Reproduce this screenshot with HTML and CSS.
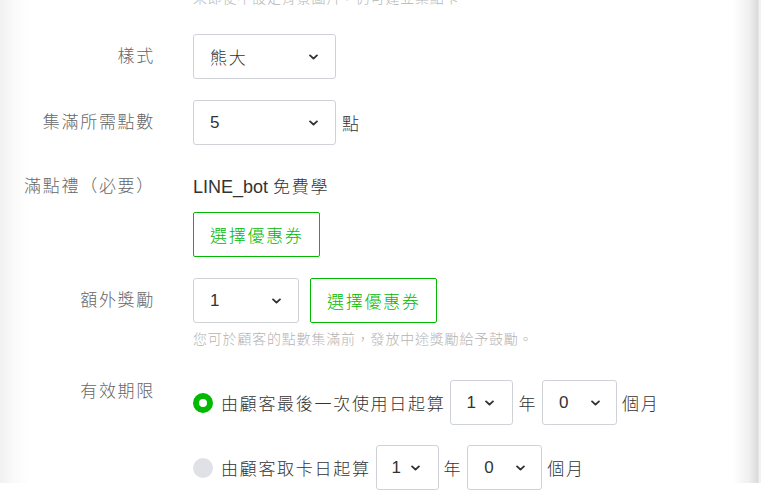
FILE: index.html
```html
<!DOCTYPE html>
<html lang="zh-Hant">
<head>
<meta charset="utf-8">
<link rel="stylesheet" href="styles.css">
</head>
<body>
<div class="page">
  <form class="form">
    <p class="help help-top">來即使不設定背景圖片，仍可建立集點卡。</p>

    <div class="row row-center">
      <div class="label">樣式</div>
      <div class="controls">
        <div class="select w142"><span>熊大</span><svg class="chev" viewBox="0 0 10 6"><polyline points="1.2,1.2 5,4.8 8.8,1.2"/></svg></div>
      </div>
    </div>

    <div class="row row-center">
      <div class="label">集滿所需點數</div>
      <div class="controls">
        <div class="select w142"><span>5</span><svg class="chev" viewBox="0 0 10 6"><polyline points="1.2,1.2 5,4.8 8.8,1.2"/></svg></div>
        <span class="unit">點</span>
      </div>
    </div>

    <div class="row row-top row-gift">
      <div class="label label-line">滿點禮（必要）</div>
      <div class="stack">
        <div class="value"><span class="latin">LINE_bot </span>免費學</div>
        <button type="button" class="btn">選擇優惠券</button>
      </div>
    </div>

    <div class="row row-top">
      <div class="label label-tall">額外獎勵</div>
      <div class="stack">
        <div class="controls gap11">
          <div class="select w106"><span>1</span><svg class="chev" viewBox="0 0 10 6"><polyline points="1.2,1.2 5,4.8 8.8,1.2"/></svg></div>
          <button type="button" class="btn">選擇優惠券</button>
        </div>
        <p class="help help-below">您可於顧客的點數集滿前，發放中途獎勵給予鼓勵。</p>
      </div>
    </div>

    <div class="row row-top row-expiry">
      <div class="label label-line">有效期限</div>
      <div class="options">
        <div class="option">
          <span class="radio on"></span>
          <span class="text">由顧客最後一次使用日起算</span>
          <div class="select w63"><span>1</span><svg class="chev" viewBox="0 0 10 6"><polyline points="1.2,1.2 5,4.8 8.8,1.2"/></svg></div>
          <span class="text">年</span>
          <div class="select w75"><span>0</span><svg class="chev" viewBox="0 0 10 6"><polyline points="1.2,1.2 5,4.8 8.8,1.2"/></svg></div>
          <span class="text">個月</span>
        </div>
        <div class="option">
          <span class="radio"></span>
          <span class="text">由顧客取卡日起算</span>
          <div class="select w63"><span>1</span><svg class="chev" viewBox="0 0 10 6"><polyline points="1.2,1.2 5,4.8 8.8,1.2"/></svg></div>
          <span class="text">年</span>
          <div class="select w75"><span>0</span><svg class="chev" viewBox="0 0 10 6"><polyline points="1.2,1.2 5,4.8 8.8,1.2"/></svg></div>
          <span class="text">個月</span>
        </div>
      </div>
    </div>
  </form>
</div>
</body>
</html>
```

FILE: styles.css
```css
html, body {
  margin: 0;
  padding: 0;
  height: 100%;
  overflow: hidden;
}

body {
  font-family: "Liberation Sans", "Noto Sans CJK TC", sans-serif;
  font-size: 17px;
  font-weight: 300;
  letter-spacing: 1.7px;
  color: #333;
  background: #fff;
}

.page {
  height: 100%;
  background: linear-gradient(to right,
    #f1f1f1 0px, #fafafa 14px, #fff 30px,
    #fff calc(100% - 28px), #f0f0f0 calc(100% - 12px), #dadada calc(100% - 3px),
    #f2f2f2 calc(100% - 2px), #f2f2f2 100%);
}

.help {
  margin: 0;
  font-size: 14px;
  letter-spacing: 0.8px;
  line-height: 20px;
  color: #b4b4b4;
}

.help-top {
  margin-top: -12px;
  margin-left: 193px;
  margin-bottom: 26px;
}

.help-below {
  margin-top: 6px;
}

.row {
  display: grid;
  grid-template-columns: 155px 1fr;
  column-gap: 38px;
  margin-bottom: 21px;
}

.row-center {
  align-items: center;
}

.row-top {
  align-items: start;
}

.row-gift {
  margin-top: 30px;
}

.row-expiry {
  margin-top: 31px;
}

.label {
  text-align: right;
  color: #666;
  white-space: nowrap;
  line-height: 24px;
}

.label-line {
  line-height: 24px;
}

.label-tall {
  line-height: 45px;
}

.controls {
  display: flex;
  align-items: center;
  gap: 6px;
}

.gap11 {
  gap: 11px;
}

.stack {
  display: flex;
  flex-direction: column;
  align-items: flex-start;
}

.value {
  line-height: 24px;
  color: #333;
  margin-bottom: 12px;
}

.latin {
  font-size: 18px;
  letter-spacing: 0;
}

.unit {
  color: #333;
}

.select {
  box-sizing: border-box;
  height: 45px;
  border: 1px solid #cfd3d8;
  border-radius: 3px;
  display: flex;
  align-items: center;
  justify-content: space-between;
  padding: 0 17px 0 16px;
  background: #fff;
  color: #333;
  flex: none;
}

.w142 { width: 143px; }
.w106 { width: 106px; }
.w63 { width: 63px; padding-left: 15px; padding-right: 18px; }
.w75 { width: 75px; padding-right: 16px; }

.chev {
  width: 9px;
  height: 6px;
  fill: none;
  stroke: #333;
  stroke-width: 2.1;
  stroke-linecap: round;
  stroke-linejoin: round;
}

.btn {
  box-sizing: border-box;
  height: 45px;
  padding: 0 15px 0 16px;
  border: 1px solid #00b900;
  border-radius: 2px;
  background: #fff;
  color: #00b900;
  font-family: inherit;
  font-size: 17px;
  font-weight: 300;
  letter-spacing: 1.7px;
  cursor: pointer;
  flex: none;
}

.options {
  display: flex;
  flex-direction: column;
  gap: 20px;
}

.option {
  display: flex;
  align-items: center;
  gap: 5px;
  white-space: nowrap;
}

.radio {
  box-sizing: border-box;
  width: 20px;
  height: 20px;
  border-radius: 50%;
  background: #dfe1e6;
  margin-right: 3px;
  flex: none;
}

.radio.on {
  background: #fff;
  border: 6px solid #00b900;
}

.text {
  color: #333;
}
```
